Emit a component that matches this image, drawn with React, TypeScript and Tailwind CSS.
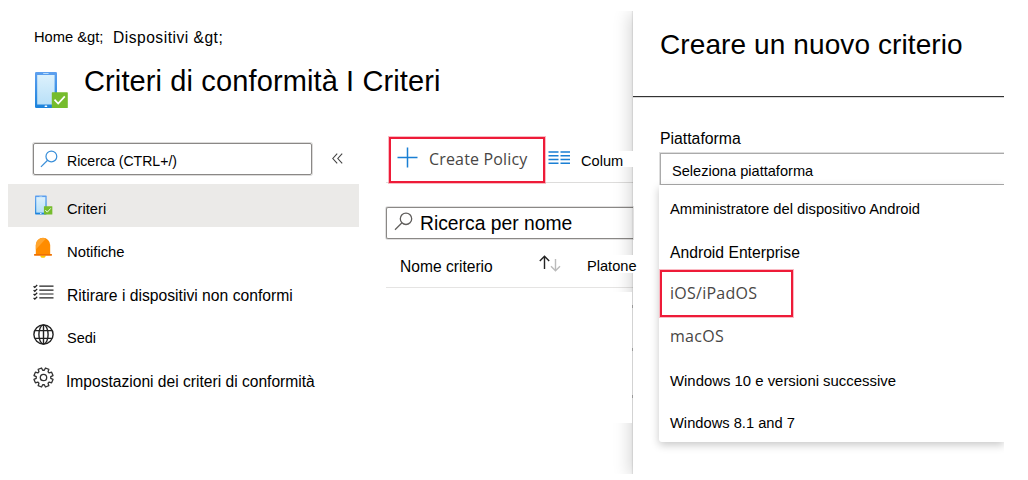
import React from "react";

function Phone({ className }: { className: string }) {
  return (
    <svg className={className} viewBox="0 0 34 38" fill="none">
      <defs>
        <linearGradient id="frame" x1="0" y1="0" x2="0" y2="1">
          <stop offset="0" stopColor="#5ea0ef" />
          <stop offset="1" stopColor="#1b83dc" />
        </linearGradient>
        <linearGradient id="screen" x1="0" y1="0" x2="0" y2="1">
          <stop offset="0" stopColor="#dcf1fc" />
          <stop offset="1" stopColor="#b9e0f8" />
        </linearGradient>
      </defs>
      <rect x="1" y="1" width="22" height="36" rx="1.2" fill="url(#frame)" />
      <rect x="3.2" y="4" width="17.4" height="29.5" fill="url(#screen)" />
      <rect x="9.2" y="2" width="5.4" height="1" fill="#b9dcfa" />
      <rect x="10.6" y="34.4" width="2.6" height="1.6" rx="0.6" fill="#fff" />
      <rect x="17.8" y="21.3" width="16" height="15.7" rx="0.6" fill="#76bc2d" />
      <path d="M20.5 28.7l3.7 3.9 6.6-7.2" stroke="#fff" strokeWidth="1.7" />
    </svg>
  );
}

function SearchIcon({ className }: { className: string }) {
  return (
    <svg className={className} viewBox="0 0 19 19" fill="none" stroke="currentColor" strokeWidth="1.3">
      <circle cx="12" cy="6.8" r="5.7" />
      <path d="M8 10.8L1 17.8" />
    </svg>
  );
}

function Bell() {
  return (
    <svg className="h-[22px] w-[18px]" viewBox="0 0 18 22">
      <path d="M6.3 18.5h5.4a2.7 2.3 0 0 1-5.4 0z" fill="#ffca00" />
      <path d="M1.8 17.2V8a7.2 7.2 0 0 1 14.4 0v9.2z" fill="#ff8c00" />
      <path d="M1.8 12.5V8A7.2 7.2 0 0 1 12 1.6z" fill="#ffa52e" />
      <rect x="0" y="17" width="18" height="1.7" rx="0.6" fill="#ef7100" />
    </svg>
  );
}

function Checklist() {
  return (
    <svg className="h-[16px] w-[21px]" viewBox="0 0 21 16" fill="none" stroke="#222">
      <path d="M6.3 2.2H20.5M6.3 6.1H20.5M6.3 10H20.5M6.3 13.9H20.5" strokeWidth="1.2" />
      <path
        d="M.6 2.2l1.2 1.2L4.2 1M.6 6.1l1.2 1.2 2.4-2.4M.6 10l1.2 1.2 2.4-2.4M.6 13.9l1.2 1.2 2.4-2.4"
        strokeWidth="1.3"
      />
    </svg>
  );
}

function Globe() {
  return (
    <svg className="h-[21px] w-[21px]" viewBox="0 0 21 21" fill="none" stroke="#222" strokeWidth="1.4">
      <circle cx="10.5" cy="10.5" r="9.6" />
      <ellipse cx="10.5" cy="10.5" rx="4.6" ry="9.6" />
      <path d="M10.5 .9v19.2M2 6.6h17M2 14.4h17" />
    </svg>
  );
}

function Gear() {
  const teeth = 8;
  const points: string[] = [];
  for (let i = 0; i < teeth; i++) {
    const a = (i * 2 * Math.PI) / teeth - Math.PI / 2 + Math.PI / 8;
    [
      [-0.28, 7.3],
      [-0.19, 9.7],
      [0.19, 9.7],
      [0.28, 7.3],
    ].forEach(([d, r]) => {
      points.push(`${(10.5 + r * Math.cos(a + d)).toFixed(2)},${(10.5 + r * Math.sin(a + d)).toFixed(2)}`);
    });
  }
  return (
    <svg className="h-[21px] w-[21px]" viewBox="0 0 21 21" fill="none" stroke="#333" strokeWidth="1.3" strokeLinejoin="round">
      <polygon points={points.join(" ")} />
      <circle cx="10.5" cy="10.5" r="3.2" />
    </svg>
  );
}

function NavItem({ icon, children, className }: { icon: React.ReactNode; children: React.ReactNode; className: string }) {
  return (
    <div className={`flex h-[43px] items-start ${className}`}>
      <div className="flex h-[43px] w-[34px] shrink-0 items-start justify-center">{icon}</div>
      {children}
    </div>
  );
}

export default function App() {
  return (
    <div className="h-[480px] w-[1028px] overflow-hidden bg-white pt-[11px] font-['Liberation_Sans',Arial,sans-serif] whitespace-nowrap text-black">
      <div className="flex h-[463px] w-[1004px] overflow-hidden">
        <main className="flex w-[633px] shrink-0 flex-col">
          <header className="h-[125px] pt-[16px] pl-[34px]">
            <div className="flex h-5 leading-5">
              <span className="w-[79px] text-[14.7px]">Home &amp;gt;</span>
              <span className="pt-px text-[15.6px] tracking-[0.5px]">Dispositivi &amp;gt;</span>
            </div>
            <div className="flex">
              <Phone className="mt-[24px] h-[38px] w-[34px]" />
              <h1 className="mt-[16px] ml-[16px] text-[29px] leading-9 tracking-[0.12px]">Criteri di conformità I Criteri</h1>
            </div>
          </header>
          <div className="flex">
            <aside className="w-[360px] shrink-0 pl-2">
              <div className="flex h-12 items-start pt-[7px] pl-[25px]">
                <div className="flex h-[32px] w-[279px] items-start rounded-[2px] border border-[#8a8886] pl-[6px] shadow-[0_0_0_1px_rgba(138,136,134,0.3)]">
                  <SearchIcon className="mt-[6px] h-[18px] w-[18px] text-[#3a8fd9]" />
                  <span className="mt-[7px] ml-[9px] text-[14.1px] leading-5">Ricerca (CTRL+/)</span>
                </div>
                <svg className="mt-[10px] ml-[20px] h-[11px] w-[11px]" viewBox="0 0 11 11" fill="none" stroke="#444" strokeWidth="1.1">
                  <path d="M5.2.6L.8 5.5l4.4 4.9M10.2.6L5.8 5.5l4.4 4.9" />
                </svg>
              </div>
              <NavItem className="mr-px bg-[#ebeae8] pl-[25px]" icon={<Phone className="mt-[11px] mr-[14px] h-[20px] w-[19px]" />}>
                <span className="mt-[15px] text-[14.7px] leading-5">Criteri</span>
              </NavItem>
              <NavItem className="pl-[25px]" icon={<div className="mt-[10px] mr-[15px]"><Bell /></div>}>
                <span className="mt-[15px] text-[14.8px] leading-5">Notifiche</span>
              </NavItem>
              <NavItem className="pl-[25px]" icon={<div className="mt-[14px] mr-[14px]"><Checklist /></div>}>
                <span className="mt-[16px] text-[15.7px] leading-5">Ritirare i dispositivi non conformi</span>
              </NavItem>
              <NavItem className="pl-[25px]" icon={<div className="mt-[11px] mr-[14px]"><Globe /></div>}>
                <span className="mt-[15px] text-[14.5px] leading-5">Sedi</span>
              </NavItem>
              <NavItem className="pl-[25px]" icon={<div className="mt-[11px] mr-[14px]"><Gear /></div>}>
                <span className="mt-[16px] -ml-px text-[15.6px] leading-5">Impostazioni dei criteri di conformità</span>
              </NavItem>
            </aside>
            <section className="w-[273px] pl-[26px]">
              <div className="flex h-[47px] border-b border-[#dddcdb]">
                <div className="mt-px ml-[3px] flex h-[46px] w-[156px] shrink-0 items-start border-2 border-[#ee1b38] pl-[6px] shadow-[0_0_0_1px_rgba(238,27,56,0.3)]">
                  <svg className="mt-[8px] h-[21px] w-[21px]" viewBox="0 0 21 21" stroke="#1a7fd4" strokeWidth="1.5">
                    <path d="M10.5.5v20M.5 10.5h20" />
                  </svg>
                  <span className="mt-[8px] ml-[11px] font-['Open_Sans'] text-[16px] leading-6 tracking-[0.17px] text-[#484644]">Create Policy</span>
                </div>
                <svg className="mt-[15px] ml-[3px] h-[14px] w-[22px] shrink-0" viewBox="0 0 22 14" stroke="#1a7fd4" strokeWidth="1.4">
                  <path d="M.5 1h10M12.5 1h9.5M.5 4.7h10M12.5 4.7h9.5M.5 8.5h10M12.5 8.5h9.5M.5 12.2h10M12.5 12.2h9.5" />
                </svg>
                <div className="relative z-10 mt-[15px] ml-[11px] h-[16px] w-[52px] shrink-0 bg-white text-[14.6px] leading-5">Colum</div>
              </div>
              <div className="mt-[24px] flex h-[32px] items-start rounded-l-[2px] border border-r-0 border-[#8a8886] pl-[7px] shadow-[0_0_0_1px_rgba(138,136,134,0.25)]">
                <SearchIcon className="mt-[4px] h-[19px] w-[19px] text-[#605e5c]" />
                <span className="mt-[4px] ml-[7px] text-[19.3px] leading-6">Ricerca per nome</span>
              </div>
              <div className="flex h-[49px] border-b border-[#e5e4e3] pt-[18px] pl-[14px] leading-5">
                <span className="w-[139px] shrink-0 text-[15.6px]">Nome criterio</span>
                <svg className="-mt-[2px] h-[17px] w-[22px] shrink-0" viewBox="0 0 22 17" fill="none" strokeWidth="1.4">
                  <path d="M5.5 14V1.5M.8 6L5.5 1.3 10.2 6" stroke="#222" />
                  <path d="M16.5 4v11.5M12 11.3l4.5 4.5 4.5-4.5" stroke="#bbb" />
                </svg>
                <div className="relative z-10 -mt-[2px] ml-[26px] h-[18px] w-[46px] shrink-0 bg-white pt-px text-[14.6px] leading-5">Platone</div>
              </div>
              <div className="relative z-10 mt-[4px] mr-px flex h-[131px] flex-col items-end bg-white">
                <div className="mt-[13px] -mr-px h-[3px] w-px bg-[#999]" />
                <div className="mt-[40px] -mr-px h-[3px] w-px bg-[#999]" />
                <div className="mt-[44px] -mr-px h-[3px] w-px bg-[#999]" />
              </div>
            </section>
          </div>
        </main>
        <aside className="w-[371px] shrink-0 shadow-[-1px_0_1px_rgba(0,0,0,0.08),-3px_2px_16px_rgba(0,0,0,0.17)]">
          <div className="h-[86px] border-b border-[#333] pt-[16px] pl-[27px] shadow-[0_1px_0_rgba(0,0,0,0.15)]">
            <h2 className="text-[28px] leading-9 tracking-[0.1px]">Creare un nuovo criterio</h2>
          </div>
          <div className="pl-[27px]">
            <div className="mt-[32px] text-[15.8px] leading-5">Piattaforma</div>
            <div className="mt-[4px] h-[32px] border border-r-0 border-[#aaa] pt-[7px] pl-[11px] text-[14.6px] leading-5 shadow-[0_0_0_1px_rgba(170,170,170,0.4)]">
              Seleziona piattaforma
            </div>
            <div className="-ml-px h-[257px] rounded-bl-[3px] bg-white pl-[11px] shadow-[0_3px_9px_rgba(0,0,0,0.22)]">
              <div className="h-[43px] pt-[14px] text-[14.75px] leading-5">Amministratore del dispositivo Android</div>
              <div className="h-[42px] pt-[15px] text-[15.7px] leading-5">Android Enterprise</div>
              <div className="-ml-[10px] h-[47px] w-[133px] border-2 border-[#ee1b38] pt-[9px] pl-[8px] font-['Open_Sans'] text-[16px] leading-6 tracking-[0.25px] text-[#484644] shadow-[0_0_0_1px_rgba(238,27,56,0.3)]">
                iOS/iPadOS
              </div>
              <div className="h-[39px] pt-[7px] font-['Open_Sans'] text-[16px] leading-6 tracking-[0.3px] text-[#484644]">macOS</div>
              <div className="h-[42px] pt-[15px] text-[14.9px] leading-5">Windows 10 e versioni successive</div>
              <div className="pt-[15px] text-[14.7px] leading-5">Windows 8.1 and 7</div>
            </div>
          </div>
        </aside>
      </div>
    </div>
  );
}
